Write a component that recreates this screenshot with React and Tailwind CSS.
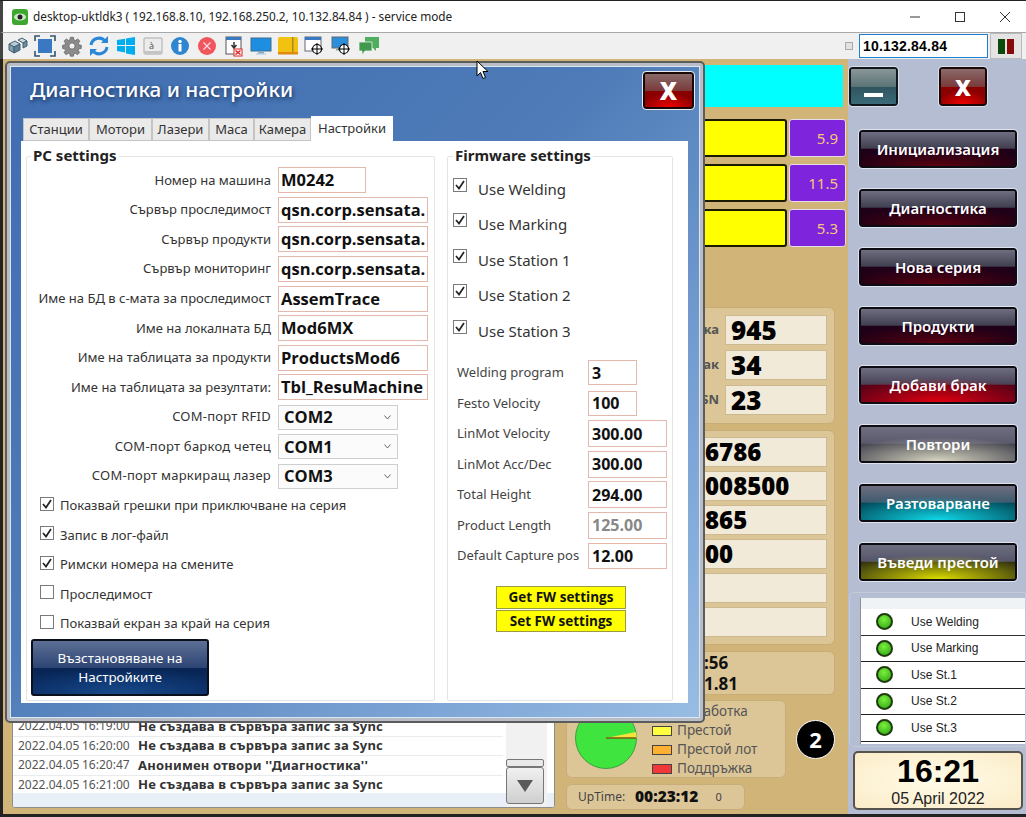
import React from "react";

const ui = { fontFamily: '"Noto Sans","Open Sans",sans-serif' };
const heavy = { fontFamily: '"Open Sans","Noto Sans",sans-serif' };

function ToolbarIcons() {
  return (
    <div className="flex items-center gap-[5px] pl-[4px]">
      <svg width="22" height="22" viewBox="0 0 22 22"><path d="M2 9l6-3 5 3-6 3z" fill="#b8cbd8" stroke="#45606f"/><path d="M2 9v6l5 3v-6z" fill="#7f9eb0" stroke="#45606f"/><path d="M7 12v6l6-3V9z" fill="#5b7f95" stroke="#45606f"/><path d="M11 5l4-2 5 3-4 2z" fill="#c9d8e1" stroke="#45606f"/><path d="M16 8v5l4-2V6z" fill="#6d8ea3" stroke="#45606f"/></svg>
      <svg width="22" height="22" viewBox="0 0 22 22"><rect x="4" y="4" width="14" height="14" fill="#3a78c2"/><path d="M1 6V1h5M16 1h5v5M21 16v5h-5M6 21H1v-5" fill="none" stroke="#30566f" strokeWidth="1.6"/></svg>
      <svg width="22" height="22" viewBox="0 0 24 24" fill="#8b8b8b" stroke="#666" strokeWidth="1"><path d="M10 1h4l.6 3.2 2 .9L19.4 3l2.8 2.9-2 2.7.8 2 3 .6v4l-3.100.6-.8 2 1.900 2.700-2.800 2.800-2.700-1.900-2 .8-.6 3H10l-.6-3-2-.8-2.700 1.900-2.800-2.800 1.800-2.700-.8-2L0 15.200v-4l3-.6.800-2L2 5.900 4.800 3l2.700 2 2-.8z" transform="scale(.85) translate(2 2)"/><circle cx="12" cy="12" r="3.500" fill="#f0f0f0"/></svg>
      <svg width="22" height="22" viewBox="0 0 22 22" fill="none" stroke="#2a87d8" strokeWidth="3"><path d="M3 10a8 8 0 0 1 14-4"/><path d="M19 12a8 8 0 0 1-14 4"/><path d="M20 1v7h-7z" fill="#2a87d8" stroke="none"/><path d="M2 21v-7h7z" fill="#2a87d8" stroke="none"/></svg>
      <svg width="22" height="22" viewBox="0 0 22 22" fill="#00adef"><path d="M2 5l8-1.200V10H2zM11 3.600L20 2v8h-9zM2 11h8v6.400L2 16zM11 11h9v9l-9-1.400z"/></svg>
      <svg width="22" height="22" viewBox="0 0 22 22"><rect x="2" y="3" width="18" height="16" rx="1" fill="#ececec" stroke="#aaa"/><rect x="2" y="16" width="18" height="3" fill="#c4c4c4"/><text x="7" y="14" fontSize="9" fill="#555">à</text></svg>
      <svg width="22" height="22" viewBox="0 0 22 22"><circle cx="11" cy="11" r="9" fill="#2d86cf"/><rect x="9.500" y="9" width="3" height="7.500" fill="#fff"/><circle cx="11" cy="6.500" r="1.700" fill="#fff"/></svg>
      <svg width="22" height="22" viewBox="0 0 22 22"><circle cx="11" cy="11" r="9" fill="#f0565c"/><path d="M7.500 7.500l7 7M14.500 7.500l-7 7" stroke="#fde" strokeWidth="1.100"/></svg>
      <svg width="22" height="22" viewBox="0 0 22 22"><rect x="3" y="2" width="15" height="17" fill="#fff" stroke="#555"/><rect x="3" y="2" width="15" height="3" fill="#3a78c2"/><path d="M11 7v5M8.500 10l2.500 3 2.500-3" stroke="#333" strokeWidth="1.500" fill="none"/><rect x="11" y="14" width="8" height="7" fill="#fff" stroke="#d22"/><path d="M12.500 15.500l5 4M17.500 15.500l-5 4" stroke="#d22" strokeWidth="1.500"/></svg>
      <svg width="22" height="22" viewBox="0 0 22 22"><rect x="1" y="3" width="20" height="13" fill="#1e8fe0" stroke="#3c6d92"/><rect x="8" y="17" width="6" height="1.500" fill="#7ea9c9"/><rect x="6" y="18.500" width="10" height="1" fill="#a9c3d8"/></svg>
      <svg width="22" height="22" viewBox="0 0 22 22"><rect x="1" y="2" width="20" height="17" rx="1.500" fill="#f3c211"/><rect x="1" y="17" width="20" height="2.500" fill="#e08a10"/><rect x="15" y="2" width="1.500" height="15" fill="#a88a20"/></svg>
      <svg width="22" height="22" viewBox="0 0 22 22"><rect x="1" y="2" width="16" height="14" fill="#fff" stroke="#667"/><rect x="1" y="2" width="16" height="3" fill="#3a78c2"/><circle cx="13" cy="14" r="4.500" fill="#fff" stroke="#000" strokeWidth="1.200"/><path d="M13 8v12M7 14h12" stroke="#000"/></svg>
      <svg width="22" height="22" viewBox="0 0 22 22"><rect x="1" y="2" width="16" height="11" fill="#2b8fdc" stroke="#667"/><rect x="5" y="14" width="8" height="1.500" fill="#8aa"/><circle cx="13" cy="14" r="4.500" fill="#fff" stroke="#000" strokeWidth="1.200"/><path d="M13 8v12M7 14h12" stroke="#000"/></svg>
      <svg width="22" height="22" viewBox="0 0 22 22"><path d="M7 2h14v11h-3v3l-3-3H7z" fill="#4fae5e"/><path d="M1 7h13v9H7l-3 4v-4H1z" fill="#3f9a4e" stroke="#f0f0f0" strokeWidth=".8"/></svg>
    </div>
  );
}

const gloss = {
  base: "bg-[radial-gradient(ellipse_70%_50%_at_50%_100%,#5a0010_0%,transparent_100%),linear-gradient(#6e6e80_0%,#3f3f50_48%,#22001a_50%,#120014_100%)]",
  red: "bg-[radial-gradient(ellipse_70%_70%_at_50%_100%,#e00010_0%,transparent_100%),linear-gradient(#6e6e80_0%,#4a4258_48%,#500018_50%,#500018_100%)]",
  grey: "bg-[radial-gradient(ellipse_70%_70%_at_50%_100%,#d8d6c0_0%,transparent_100%),linear-gradient(#6e6e80_0%,#5a5a6c_48%,#44444f_50%,#44444f_100%)]",
  cyan: "bg-[radial-gradient(ellipse_70%_70%_at_50%_100%,#10d8e8_0%,transparent_100%),linear-gradient(#6e6e80_0%,#3f5a6e_48%,#004858_50%,#004858_100%)]",
  yellow: "bg-[radial-gradient(ellipse_70%_70%_at_50%_100%,#dcdc00_0%,transparent_100%),linear-gradient(#6e6e80_0%,#55556a_48%,#2f2f10_50%,#2f2f10_100%)]",
};

const sideButtons = [
  ["Инициализация", gloss.base],
  ["Диагностика", gloss.base],
  ["Нова серия", gloss.base],
  ["Продукти", gloss.base],
  ["Добави брак", gloss.red],
  ["Повтори", gloss.grey],
  ["Разтоварване", gloss.cyan],
  ["Въведи престой", gloss.yellow],
];

function Led() {
  return <span className="w-[17px] h-[17px] rounded-full border-[2px] border-[#1f3a10] bg-[radial-gradient(circle_at_45%_35%,#7cf03c,#27a010)]" />;
}

function Sidebar() {
  return (
    <div className="w-[178px] h-full bg-[#b5bdd3] flex flex-col shrink-0">
      <div className="flex pt-[8px] pl-[1px]">
        <button className="w-[49px] h-[39px] rounded-[3px] border-[2px] border-[#10181c] outline outline-1 outline-[#d8deea] bg-[linear-gradient(#8a9696_0%,#5b7478_50%,#2f5460_52%,#3b6a78_100%)] flex items-end justify-center pb-[7px]">
          <span className="block w-[19px] h-[4px] bg-white" />
        </button>
        <button className="ml-[41px] w-[48px] h-[39px] rounded-[3px] border-[2px] border-[#1a0808] outline outline-1 outline-[#d8deea] bg-[radial-gradient(ellipse_60%_40%_at_50%_100%,#f00000,transparent),linear-gradient(#8a6a6a_0%,#7a3a3a_50%,#8a0000_52%,#8a0000_100%)] text-white text-[22px] font-black leading-none" style={heavy}>X</button>
      </div>
      <div className="flex flex-col gap-[21px] pl-[11px] mt-[24px]">
        {sideButtons.map(([t, c]) => (
          <div key={t} className={`w-[158px] h-[38px] rounded-[3px] border-[2px] border-[#0c0c12] outline outline-1 outline-[#dfe3ee] flex items-center justify-center text-white font-semibold text-[15px] ${c}`} style={ui}>{t}</div>
        ))}
      </div>
      <div className="mt-[11px] ml-[1px] h-[155px] rounded-l-[5px] border border-[#c3cadb] bg-[#b5bdd3] pl-[10px] pt-[5px]">
        <div className="w-full h-[146px] bg-white border-l border-[#8a8f9c]">
          <div className="h-[11px] bg-[#f0f3f6]" />
          {["Use Welding", "Use Marking", "Use St.1", "Use St.2", "Use St.3"].map((t, i) => (
            <div key={t} className={`h-[26.500px] flex items-center pl-[15px] border-b ${i === 0 ? "border-[#333]" : "border-[#222]"}`}>
              <Led />
              <span className="ml-[18px] text-[12px] text-[#222]" style={{ fontFamily: '"Liberation Sans",sans-serif' }}>{t}</span>
            </div>
          ))}
        </div>
      </div>
      <div className="mt-[4px] ml-[5px] w-[170px] h-[59px] rounded-[5px] border-[2px] border-[#55534c] bg-[radial-gradient(ellipse_at_center,#fffbe8,#fbecc8)] flex flex-col items-center justify-center" style={{ fontFamily: '"Liberation Sans",sans-serif' }}>
        <span className="text-[32px] leading-[35px] font-bold text-black">16:21</span>
        <span className="text-[16px] leading-[19px] text-[#222]">05 April 2022</span>
      </div>
    </div>
  );
}

function TanArea() {
  return (
    <div className="w-[845px] h-full bg-[#d0b478] flex shrink-0">
      <div className="w-[557px] flex flex-col justify-end pl-[9px] pb-[6px] pr-[5px]">
        <div className="relative h-[100px] bg-white border border-[#8c8c8c] rounded-[3px] overflow-hidden" style={ui}>
          <div className="absolute inset-x-0 bottom-[12px]">
            {[
              ["2022.04.05", "16:19:00", "Не създава в сървъра запис за Sync"],
              ["2022.04.05", "16:20:00", "Не създава в сървъра запис за Sync"],
              ["2022.04.05", "16:20:47", "Анонимен отвори ''Диагностика''"],
              ["2022.04.05", "16:21:00", "Не създава в сървъра запис за Sync"],
            ].map(([d, t, m]) => (
              <div key={t} className="flex h-[19.500px] items-center border-b border-[#e8ecef] pl-[5px] w-[490px]">
                <span className="w-[64px] text-[12px] text-[#555] whitespace-nowrap">{d}</span>
                <span className="w-[56px] text-[12px] text-[#555]">{t}</span>
                <span className="font-bold text-[13px] text-[#333] whitespace-nowrap tracking-[0.2px]">{m}</span>
              </div>
            ))}
          </div>
          <div className="absolute inset-x-0 bottom-0 h-[14px] bg-[#e9eff7]" />
          <div className="absolute left-[493px] top-0 bottom-0 w-[41px] bg-[#f1f1f1]" />
          <div className="absolute left-[493px] bottom-[40px] w-[38px] h-[8px] rounded-[2px] border border-[#777] bg-[#e9e9e9]" />
          <div className="absolute left-[493px] bottom-[3px] w-[38px] h-[37px] rounded-[3px] border border-[#777] bg-[linear-gradient(#f0f0f0,#cfcfcf)] flex items-center justify-center">
            <svg width="18" height="12" viewBox="0 0 18 12"><path d="M1 0h16L9 12z" fill="#5a5a5a" /></svg>
          </div>
        </div>
      </div>
      <div className="w-[288px]" style={ui}>
        <div className="ml-[6px] mt-[6px] w-[277px] h-[42px] bg-[#00ffff]" />
        {["5.9", "11.5", "5.3"].map((v, i) => (
          <div key={v} className={`flex gap-[2px] ml-[6px] ${i === 0 ? "mt-[12px]" : "mt-[7px]"}`}>
            <div className="w-[221px] h-[38px] bg-[#ffff00] border-[2px] border-[#1a1a00] rounded-[3px]" />
            <div className="w-[57px] h-[38px] bg-[#7d24dc] border border-[#e6dbe8] rounded-[3px] flex items-center justify-end pr-[7px] text-[15px] text-[#f4c878]">{v}</div>
          </div>
        ))}
        <div className="ml-[6px] mt-[60px] w-[269px] h-[117px] bg-[#dcc698] border border-[#c9ad78] rounded-[6px] flex flex-col items-end gap-[5px] pt-[7px] pr-[7px]">
          {[["Бройка", "945"], ["Брак", "34"], ["SN", "23"]].map(([l, v]) => (
            <div key={v} className="flex items-center gap-[6px]">
              <span className="text-[13px] font-bold text-[#555]">{l}</span>
              <div className="w-[102px] h-[30px] bg-[#f2ead9] border border-[#cdb98f] flex items-center pl-[5px] text-black font-extrabold text-[26px] leading-none" style={heavy}>{v}</div>
            </div>
          ))}
        </div>
        <div className="ml-[6px] mt-[6px] w-[269px] h-[215px] bg-[#dcc698] border border-[#c9ad78] rounded-[6px] flex flex-col items-end gap-[4px] pt-[6px] pr-[7px]">
          {["6786", "008500", "865", "00", "", ""].map((v, i) => (
            <div key={i} className="w-[190px] h-[30px] bg-[#f2ead9] border border-[#cdb98f] flex items-center pl-[67px] text-black font-extrabold text-[24px] leading-none" style={heavy}>{v}</div>
          ))}
        </div>
        <div className="ml-[6px] mt-[6px] w-[269px] h-[44px] bg-[#dcc698] border border-[#c9ad78] rounded-[6px] pl-[137px] font-bold text-[17px] leading-[21px] text-[#111]" style={heavy}>
          <div>:56</div>
          <div>1.81</div>
        </div>
        <div className="flex items-center ml-[6px] mt-[5px]">
          <div className="w-[220px] h-[78px] bg-[#dcc698] border border-[#c9ad78] rounded-[6px] flex items-center pl-[7px]">
            <svg width="64" height="64" viewBox="0 0 64 64" className="-mt-[2px] shrink-0">
              <circle cx="32" cy="32" r="30.500" fill="#3fe43f" stroke="#3f9f3f" />
              <path d="M32 32L62 26A31 31 0 0 1 62.500 32z" fill="#f6e43a" />
              <path d="M32 32H62" stroke="#7a5a10" strokeWidth="1.500" />
            </svg>
            <div className="ml-[14px] mt-[2px] flex flex-col text-[13.500px] leading-[19px] text-[#555]">
              {[["Обработка", "bg-[#3fe43f]"], ["Престой", "bg-[#ffff40]"], ["Престой лот", "bg-[#ffb030]"], ["Поддръжка", "bg-[#f03838]"]].map(([t, c]) => (
                <div key={t} className="flex items-center gap-[5px]">
                  <span className={`w-[20px] h-[10px] border border-[#444] ${c}`} />
                  <span>{t}</span>
                </div>
              ))}
            </div>
          </div>
          <div className="ml-[10px] mt-[1px] w-[39px] h-[39px] rounded-full bg-black border border-white flex items-center justify-center text-white font-bold text-[22px]" style={heavy}>2</div>
        </div>
        <div className="ml-[6px] mt-[6px] w-[179px] h-[26px] bg-[#dcc698] border border-[#c9ad78] rounded-[6px] flex items-center pl-[11px] text-[#444]">
          <span className="text-[12px] w-[57px]">UpTime:</span>
          <span className="text-[15.500px] font-extrabold text-[#111]" style={heavy}>00:23:12</span>
          <span className="text-[11px] ml-[17px]">0</span>
        </div>
      </div>
    </div>
  );
}

function Box({ checked, lift }) {
  return (
    <span className={`w-[14px] h-[14px] border border-[#7a7a7a] bg-white flex items-center justify-center shrink-0 ${lift}`}>
      {checked && (
        <svg width="12" height="12" viewBox="0 0 12 12"><path d="M2 6l3 3.500L10 2" fill="none" stroke="#222" strokeWidth="1.700" /></svg>
      )}
    </span>
  );
}

const pcRows = [
  ["Номер на машина", "M0242", "w-[88px]"],
  ["Сървър проследимост", "qsn.corp.sensata.", "w-[150px]"],
  ["Сървър продукти", "qsn.corp.sensata.", "w-[150px]"],
  ["Сървър мониторинг", "qsn.corp.sensata.", "w-[150px]"],
  ["Име на БД в с-мата за проследимост", "AssemTrace", "w-[150px]"],
  ["Име на локалната БД", "Mod6MX", "w-[150px]"],
  ["Име на таблицата за продукти", "ProductsMod6", "w-[150px]"],
  ["Име на таблицата за резултати:", "Tbl_ResuMachine", "w-[150px]"],
];

const fwRows = [
  ["Welding program", "3", "w-[49px] h-[25px]", false],
  ["Festo Velocity", "100", "w-[49px] h-[25px]", false],
  ["LinMot Velocity", "300.00", "w-[79px] h-[27px]", false],
  ["LinMot Acc/Dec", "300.00", "w-[79px] h-[27px]", false],
  ["Total Height", "294.00", "w-[79px] h-[27px]", false],
  ["Product Length", "125.00", "w-[79px] h-[27px]", true],
  ["Default Capture pos", "12.00", "w-[79px] h-[26px]", false],
];

function Dialog() {
  return (
    <div className="absolute left-[5px] top-[60px] w-[700px] h-[662px] rounded-[5px] border-[2px] border-[#5c5c5c] bg-[#b9bec6] p-[3px]" style={ui}>
      <div className="relative w-full h-full bg-[linear-gradient(135deg,#3f6db0_0%,#4f7cb8_45%,#7ea6d6_80%,#98bde3_100%)] border border-[#dbe6f3]">
        <div className="absolute left-[19px] top-[6px] text-[20.700px] leading-[32px] text-white font-medium [text-shadow:1px_2px_4px_#16305c]">Диагностика и настройки</div>
        <button className="absolute left-[632px] top-[5px] w-[51px] h-[37px] rounded-[3px] border-[2px] border-[#1a0808] outline outline-1 outline-[#e8ecf2] bg-[radial-gradient(ellipse_60%_40%_at_50%_100%,#f00000,transparent),linear-gradient(#8a6a6a_0%,#7a3a3a_50%,#8a0000_52%,#8a0000_100%)] text-white text-[24px] font-black leading-none" style={heavy}>X</button>

        <div className="absolute left-[12px] top-[49px] flex items-end text-[13px] text-[#333]">
          {[["Станции", "w-[66px]"], ["Мотори", "w-[63px]"], ["Лазери", "w-[57px]"], ["Маса", "w-[45px]"], ["Камера", "w-[57px]"]].map(([t, w]) => (
            <div key={t} className={`h-[23px] ${w} bg-[#eaeaea] border border-[#c4c4c4] flex items-center justify-center`}>{t}</div>
          ))}
          <div className="h-[25px] w-[82px] bg-white flex items-center justify-center">Настройки</div>
        </div>

        <div className="absolute left-[10px] top-[74px] w-[667px] h-[562px] bg-white flex pl-[5px] pt-[15px] gap-[12px]">
          <div className="relative w-[409px] h-[545px] border border-[#e4e4e4] rounded-[2px]">
            <div className="absolute left-[4px] -top-[11px] bg-white px-[2px] text-[15px] leading-[18px] font-bold text-[#222]">PC settings</div>
            <div className="pt-[8.500px] flex flex-col">
              {pcRows.map(([l, v, w]) => (
                <div key={l} className="h-[29.600px] flex items-center">
                  <span className="w-[244px] text-right text-[13px] text-[#333] whitespace-nowrap">{l}</span>
                  <span className={`ml-[7px] ${w} h-[26px] border border-[#e3b9ad] pl-[2px] font-bold text-[16.500px] leading-[24px] text-[#111] overflow-hidden whitespace-nowrap`} style={heavy}>{v}</span>
                </div>
              ))}
              {[["COM-порт RFID", "COM2"], ["COM-порт баркод четец", "COM1"], ["COM-порт маркиращ лазер", "COM3"]].map(([l, v]) => (
                <div key={l} className="h-[29.600px] flex items-center">
                  <span className="w-[244px] text-right text-[13px] text-[#333] whitespace-nowrap tracking-[0.25px]">{l}</span>
                  <span className="ml-[7px] w-[120px] h-[25px] border border-[#cfcfcf] bg-[#fbfbfb] pl-[5px] pr-[6px] font-bold text-[16.500px] leading-[24px] text-[#111] flex items-center justify-between" style={heavy}>
                    {v}
                    <svg width="7" height="5" viewBox="0 0 7 5"><path d="M.5 .5L3.500 4 6.500 .5" fill="none" stroke="#666" /></svg>
                  </span>
                </div>
              ))}
              <div className="flex flex-col pl-[13px]">
                {[["Показвай грешки при приключване на серия", true], ["Запис в лог-файл", true], ["Римски номера на смените", true], ["Проследимост", false], ["Показвай екран за край на серия", false]].map(([t, c]) => (
                  <div key={t} className="h-[29.500px] flex items-center gap-[6px] text-[13px] text-[#333]">
                    <Box checked={c} lift="-mt-[4px]" />
                    <span>{t}</span>
                  </div>
                ))}
              </div>
              <div className="ml-[4px] mt-[0.500px] w-[178px] h-[57px] rounded-[3px] border-[2px] border-[#0a0f1c] bg-[radial-gradient(ellipse_70%_50%_at_50%_100%,#174a8c,transparent),linear-gradient(#5d6f95_0%,#2e4574_50%,#082555_52%,#0a2a60_100%)] flex flex-col items-center justify-center text-white text-[13.400px] leading-[19px]">
                <span>Възстановяване на</span>
                <span>Настройките</span>
              </div>
            </div>
          </div>
          <div className="relative w-[226px] h-[545px] border border-[#e4e4e4] rounded-[2px]">
            <div className="absolute left-[5px] -top-[11px] bg-white px-[2px] text-[15px] leading-[18px] font-bold text-[#222]">Firmware settings</div>
            <div className="pt-[14px] pl-[5px] flex flex-col">
              {["Use Welding", "Use Marking", "Use Station 1", "Use Station 2", "Use Station 3"].map((t) => (
                <div key={t} className="h-[35.500px] flex items-center text-[15px] text-[#333]">
                  <Box checked lift="-mt-[8px]" />
                  <span className="ml-[11px]">{t}</span>
                </div>
              ))}
            </div>
            <div className="mt-[9px] pl-[9px] flex flex-col">
              {fwRows.map(([l, v, w, dis]) => (
                <div key={l} className="h-[30.500px] flex items-center">
                  <span className="w-[131px] text-[13px] text-[#444] whitespace-nowrap">{l}</span>
                  <span className={`${w} border border-[#e3b9ad] pl-[3px] font-bold text-[16px] leading-none flex items-center ${dis ? "text-[#888]" : "text-[#111]"}`} style={heavy}>{v}</span>
                </div>
              ))}
            </div>
            <div className="mt-[15px] ml-[48px] w-[130px] flex flex-col gap-[1px] text-[13.500px] font-bold text-[#111]" style={heavy}>
              <div className="h-[23px] bg-[#ffff00] border border-[#9a9a40] flex items-center justify-center">Get FW settings</div>
              <div className="h-[22px] bg-[#ffff00] border border-[#9a9a40] flex items-center justify-center">Set FW settings</div>
            </div>
          </div>
        </div>
      </div>
    </div>
  );
}

export default function App() {
  return (
    <div className="relative w-[1026px] h-[817px] overflow-hidden bg-white border-t border-[#222] flex flex-col">
      <div className="h-[31px] shrink-0 bg-white flex items-center pl-[9px] border-l-[3px] border-[#444]" style={ui}>
        <svg width="16" height="16" viewBox="0 0 16 16"><rect width="16" height="16" rx="3" fill="#3fa62f" /><ellipse cx="8" cy="8" rx="6" ry="3.500" fill="#cfe8c8" /><circle cx="8" cy="8" r="2.500" fill="#222" /></svg>
        <span className="ml-[5px] text-[11.800px] text-[#222] whitespace-nowrap">desktop-uktldk3 ( 192.168.8.10, 192.168.250.2, 10.132.84.84 ) - service mode</span>
        <div className="ml-auto flex items-center gap-[33px] pr-[15px]">
          <svg width="12" height="12" viewBox="0 0 12 12"><path d="M1 6h10" stroke="#333" /></svg>
          <svg width="12" height="12" viewBox="0 0 12 12"><rect x="1.500" y="1.500" width="9" height="9" fill="none" stroke="#333" /></svg>
          <svg width="12" height="12" viewBox="0 0 12 12"><path d="M1 1l10 10M11 1L1 11" stroke="#333" /></svg>
        </div>
      </div>
      <div className="h-[27px] shrink-0 bg-[#f0f0f0] border-t border-[#a8a8a8] border-l-[3px] border-l-[#444] flex items-center">
        <ToolbarIcons />
        <div className="ml-auto flex items-center pr-[4px] h-full">
          <span className="w-[8px] h-[8px] border border-[#aaa] bg-[#e2e2e2]" />
          <span className="ml-[6px] w-[129px] h-[24px] bg-white border border-[#2080d0] pl-[3px] text-[14px] leading-[22px] font-bold text-black tracking-[0.2px]" style={{ fontFamily: '"Liberation Sans",sans-serif' }}>10.132.84.84</span>
          <span className="ml-[2px] w-[32px] h-full bg-[#e4e4e4] border border-[#bbb] flex items-center justify-center gap-[2px]">
            <span className="w-[7px] h-[15px] bg-[#0c4a0c]" />
            <span className="w-[7px] h-[15px] bg-[#8a0808]" />
          </span>
        </div>
      </div>
      <div className="flex-1 min-h-0 flex border-l-[3px] border-[#222] border-b-[3px]">
        <TanArea />
        <Sidebar />
      </div>
      <Dialog />
      <svg className="absolute left-[476px] top-[59px]" width="13" height="20" viewBox="0 0 13 20"><path d="M1 1v15l3.500-3.500 2.500 6 2.500-1-2.500-6H12z" fill="#fff" stroke="#000" /></svg>
    </div>
  );
}
